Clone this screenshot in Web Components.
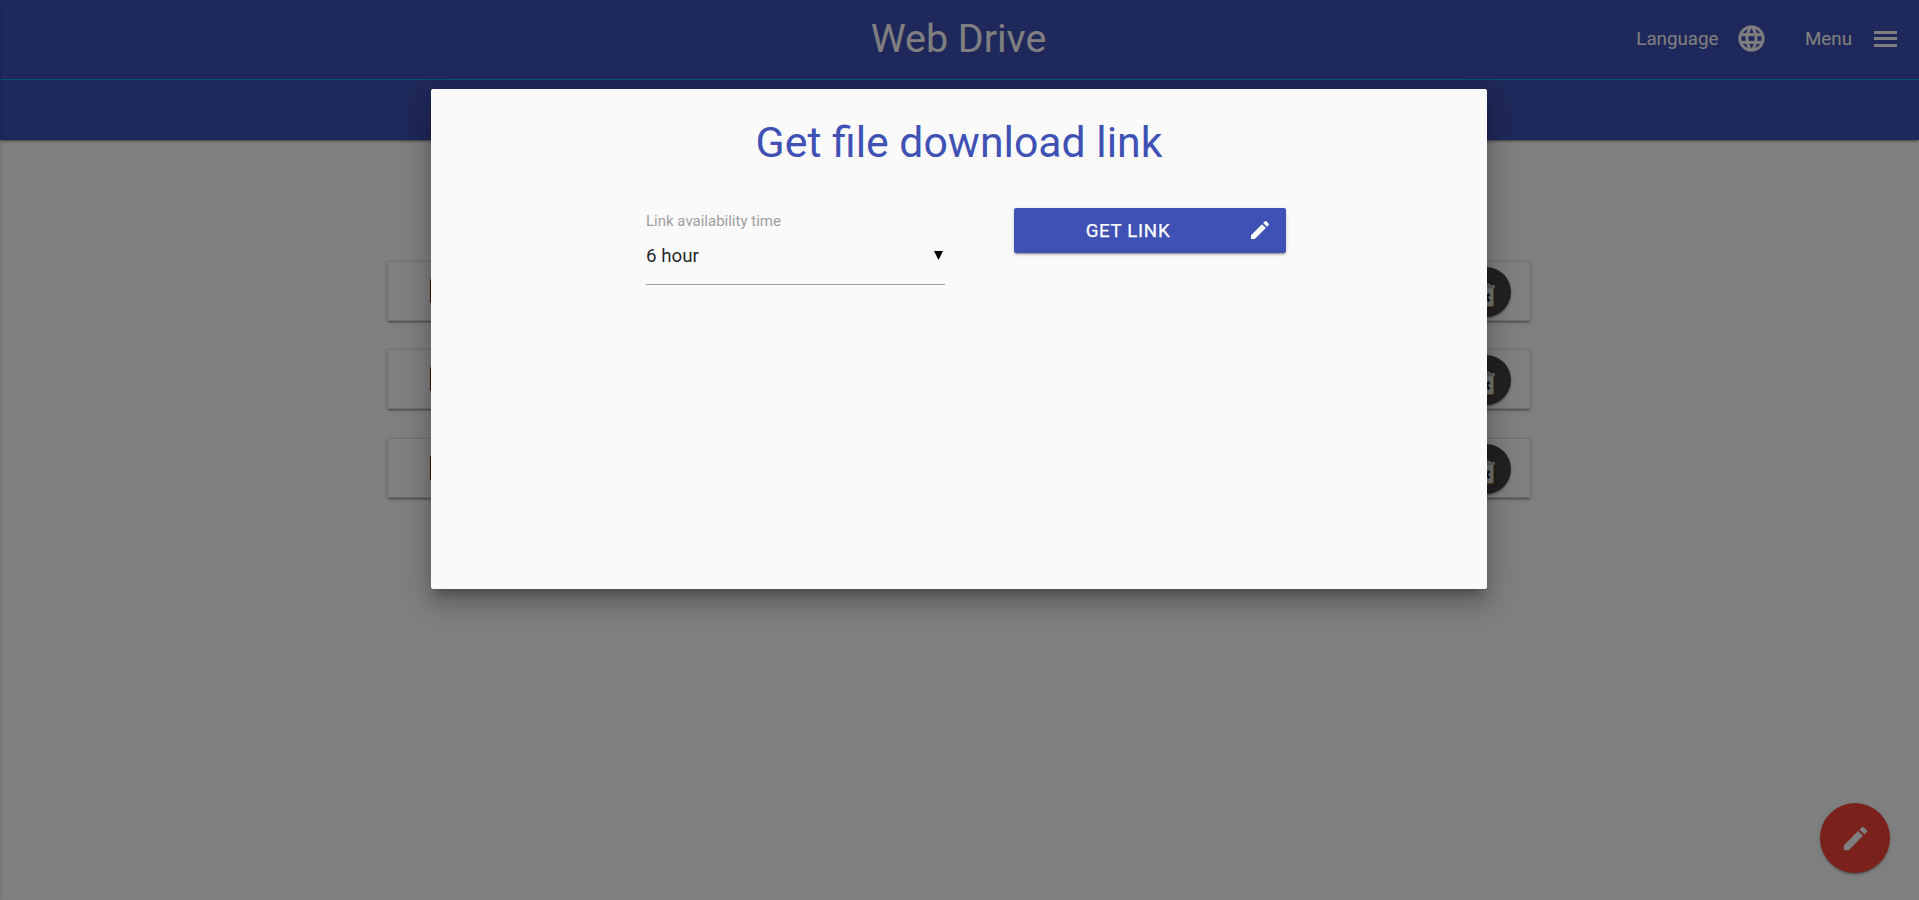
<!DOCTYPE html>
<html lang="en">
<head>
<meta charset="utf-8">
<title>Web Drive</title>
<style>
html,body{margin:0;height:100%;overflow:hidden}
body{--depth-1:0 2px 2px 0 rgba(0,0,0,.14),0 1px 5px 0 rgba(0,0,0,.12),0 3px 1px -2px rgba(0,0,0,.2);font-family:Roboto,sans-serif;font-size:18.75px;line-height:1.5;color:rgba(0,0,0,.87);background:#fff}
</style>
</head>
<body>
<drive-app></drive-app>
<script>
const define = (name, html) => customElements.define(name, class extends HTMLElement {
  constructor() {
    super();
    const t = document.createElement('template');
    t.innerHTML = html;
    this.attachShadow({mode: 'open'}).append(t.content.cloneNode(true));
  }
});

define('icon-pencil', `<style>:host{display:block;width:24px;height:24px}svg{display:block;width:100%;height:100%}</style>
<svg viewBox="0 0 24 24" fill="currentColor"><path d="M3 17.25V21h3.75L17.81 9.94l-3.75-3.75L3 17.25zM20.71 7.04a1 1 0 0 0 0-1.41l-2.34-2.34a1 1 0 0 0-1.41 0l-1.83 1.83 3.75 3.75 1.83-1.83z"/></svg>`);
define('icon-globe', `<style>:host{display:block;width:31px;height:31px;margin-top:-1px}svg{display:block;width:100%;height:100%}</style>
<svg viewBox="0 0 24 24" fill="currentColor"><path d="M11.99 2C6.47 2 2 6.48 2 12s4.47 10 9.99 10C17.52 22 22 17.52 22 12S17.52 2 11.99 2zm6.93 6h-2.95c-.32-1.25-.78-2.45-1.38-3.56 1.84.63 3.37 1.91 4.33 3.56zM12 4.04c.83 1.2 1.48 2.53 1.91 3.96h-3.82c.43-1.43 1.08-2.76 1.91-3.96zM4.26 14C4.1 13.36 4 12.69 4 12s.1-1.36.26-2h3.38c-.08.66-.14 1.32-.14 2s.06 1.34.14 2H4.26zm.82 2h2.95c.32 1.25.78 2.45 1.38 3.56-1.84-.63-3.37-1.9-4.33-3.56zm2.95-8H5.08c.96-1.66 2.49-2.93 4.33-3.56C8.81 5.55 8.35 6.75 8.03 8zM12 19.96c-.83-1.2-1.48-2.53-1.91-3.96h3.82c-.43 1.43-1.08 2.76-1.91 3.96zM14.34 14H9.66c-.09-.66-.16-1.32-.16-2s.07-1.35.16-2h4.68c.09.65.16 1.32.16 2s-.07 1.34-.16 2zm.25 5.56c.6-1.11 1.06-2.31 1.38-3.56h2.95c-.96 1.65-2.49 2.93-4.33 3.56zM16.36 14c.08-.66.14-1.32.14-2s-.06-1.34-.14-2h3.38c.16.64.26 1.31.26 2s-.1 1.36-.26 2h-3.38z" stroke="currentColor" stroke-width=".3"/></svg>`);
define('icon-menu', `<style>:host{display:block;width:31px;height:31px;margin-top:-1px}svg{display:block;width:100%;height:100%}</style>
<svg viewBox="0 0 31 31" fill="currentColor"><path d="M4 8h23v3H4zM4 14h23v3H4zM4 21h23v3H4z"/></svg>`);
define('icon-trash', `<style>:host{display:block;width:18px;height:24px}svg{display:block}</style>
<svg width="18" height="24" viewBox="0 0 18 24"><path d="M4 2.500Q4 .3 9 .3t5 2.200z" fill="#c9c4bd"/><path d="M0 2h18v3H0z" fill="#bbb"/><path d="M1 5h16v17q0 2-2 2H3q-2 0-2-2z" fill="#b98b35"/><path d="M2 5h14v16.500q0 1.500-1.500 1.500h-11Q2 23 2 21.500z" fill="#e4e4e4"/><path d="M5.500 11l7 7M12.500 11l-7 7" stroke="#0b2d4a" stroke-width="2.500"/></svg>`);

define('nav-item', `<style>:host{display:flex;align-items:center;height:78px;line-height:78px;gap:18px}</style>
<slot></slot><slot name="icon"></slot>`);

define('drive-header', `<style>
:host{display:block;height:140px;background:#3f51b5;color:#fff;box-shadow:var(--depth-1)}
.bar{display:grid;grid-template-columns:1fr auto 1fr;height:79px;border-bottom:1px solid #03a9f4}
.title{grid-column:2;font-size:39.4px;line-height:78px;padding-right:2px}
.actions{display:flex;justify-content:flex-end;gap:37.5px;padding-right:18px}
</style>
<div class="bar"><div class="title">Web Drive</div>
<div class="actions"><nav-item>Language<icon-globe slot="icon"></icon-globe></nav-item><nav-item>Menu<icon-menu slot="icon"></icon-menu></nav-item></div></div>`);

define('file-row', `<style>
:host{display:flex;justify-content:space-between;align-items:center;box-sizing:border-box;height:60px;padding:0 19px 0 42px;border:1px solid #e0e0e0;border-radius:2px;box-shadow:var(--depth-1)}
.type{width:20px;height:22px;background:#7d1a08;border:solid #a5803f;border-width:1px 0}
.remove{display:grid;place-items:center;width:50px;height:50px;margin-top:2px;border-radius:50%;background:#424242;box-shadow:var(--depth-1)}
icon-trash{margin-top:6px}
</style><div class="type"></div><div class="remove"><icon-trash></icon-trash></div>`);

define('time-select', `<style>
:host{display:block;width:299px}
label{display:block;font-size:15px;line-height:22px;color:#9e9e9e}
.field{display:flex;justify-content:space-between;align-items:center;box-sizing:border-box;height:53px;padding-bottom:4px;border-bottom:1px solid #9e9e9e}
svg{display:block;margin:-2px 1px 0 0}
</style><label><slot name="label"></slot></label><div class="field"><slot></slot><svg width="11" height="11"><path d="M1 1h9L5.500 10z"/></svg></div>`);

define('action-button', `<style>
:host{display:grid;grid-template-columns:1fr 24px;align-items:center;box-sizing:border-box;width:272px;height:45px;padding:0 14px 0 0;background:#3f51b5;color:#fff;border-radius:2px;letter-spacing:.65px;text-align:center;text-transform:uppercase;box-shadow:var(--depth-1)}
span{padding:1px 6px 0 0;-webkit-text-stroke:.25px currentColor}
icon-pencil{margin-top:-1px}
</style><span><slot></slot></span><icon-pencil></icon-pencil>`);

define('link-dialog', `<style>
:host{display:block;box-sizing:border-box;width:1056px;height:500px;padding-top:24px;background:#fafafa;border-radius:2px;box-shadow:0 16px 24px 2px rgba(0,0,0,.14),0 6px 30px 5px rgba(0,0,0,.12),0 8px 10px -5px rgba(0,0,0,.3)}
h4{margin:0;font-size:42.75px;font-weight:400;line-height:58px;text-align:center;color:#3f51b5}
.form{display:flex;align-items:flex-start;gap:69px;padding:37px 0 0 215px}
time-select{margin-top:2px}
</style><h4>Get file download link</h4>
<div class="form"><time-select><span slot="label">Link availability time</span>6 hour</time-select><action-button>Get link</action-button></div>`);

define('drive-app', `<style>
:host{display:block;position:relative;height:900px}
main{display:grid;gap:28.25px;width:1144px;margin:121px 0 0 387px}
.edit{position:absolute;right:29px;bottom:27px;display:grid;place-items:center;width:70px;height:70px;border-radius:50%;background:#f44336;color:#fff;box-shadow:var(--depth-1)}
.edit icon-pencil{width:31px;height:31px}
.drawer{position:absolute;left:-10px;top:0;width:10px;height:100%;box-shadow:var(--depth-1)}
.overlay{position:absolute;inset:0;display:flex;align-items:flex-start;box-sizing:border-box;padding:89px 0 0 431px;background:rgba(0,0,0,.5)}
</style>
<drive-header></drive-header>
<main><file-row></file-row><file-row></file-row><file-row></file-row></main>
<div class="edit"><icon-pencil></icon-pencil></div>
<div class="drawer"></div>
<div class="overlay"><link-dialog></link-dialog></div>`);
</script>
</body>
</html>
